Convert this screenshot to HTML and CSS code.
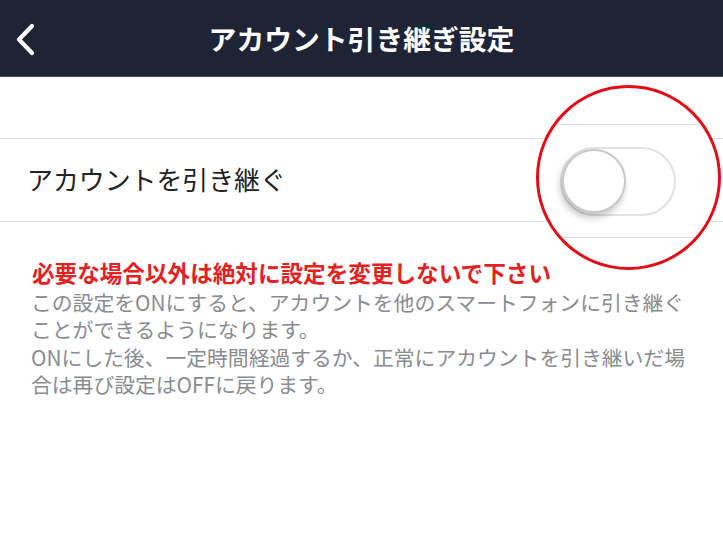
FILE: index.html
```html
<!DOCTYPE html>
<html lang="ja">
<head>
<meta charset="utf-8">
<link rel="stylesheet" href="styles.css">
</head>
<body>
<div class="page">
  <header class="bar">
    <svg class="back" width="24" height="34" viewBox="0 0 24 34">
      <path d="M17 4 L4 17.5 L17 31" fill="none" stroke="#fff" stroke-width="4.2" stroke-linecap="round" stroke-linejoin="round"/>
    </svg>
    <h1 class="title">アカウント引き継ぎ設定</h1>
  </header>
  <div class="row">
    <span class="label">アカウントを引き継ぐ</span>
  </div>
  <div class="notes">
    <p class="warn">必要な場合以外は絶対に設定を変更しないで下さい</p>
    <p class="desc">この設定をONにすると、アカウントを他のスマートフォンに引き継ぐ<br>ことができるようになります。<br>ONにした後、一定時間経過するか、正常にアカウントを引き継いだ場<br>合は再び設定はOFFに戻ります。</p>
  </div>
  <div class="lens">
    <div class="lens-row">
      <div class="track"><div class="knob"></div></div>
    </div>
  </div>
</div>
</body>
</html>
```
FILE: styles.css
```css
* { box-sizing: border-box; }
html, body { margin: 0; padding: 0; background: #fff; }
body { font-family: "Noto Sans CJK JP", "Noto Sans", sans-serif; width: 723px; height: 533px; overflow: hidden; }
.page { position: relative; width: 723px; height: 533px; }
.bar {
  height: 77px;
  background: #1e2436;
  border-bottom: 1px solid #474c5a;
  display: flex;
  align-items: center;
  justify-content: center;
  position: relative;
}
.back { position: absolute; left: 15px; top: 22px; }
.title {
  margin: 0;
  color: #fff;
  font-size: 27.8px;
  font-weight: 700;
  line-height: 1;
  padding-top: 1px;
}
.row {
  margin-top: 61px;
  height: 84px;
  border-top: 1px solid #dedede;
  border-bottom: 1px solid #dedede;
  display: flex;
  align-items: center;
  padding-left: 27px;
}
.label {
  font-size: 25.9px;
  color: #222;
  line-height: 1;
  padding-bottom: 2px;
}
.notes { padding: 37px 0 0 32px; }
.warn {
  margin: 0;
  color: #e3211f;
  font-size: 22.6px;
  font-weight: 700;
  line-height: 28px;
}
.desc {
  margin: 2px 0 0 -1px;
  color: #8a8b91;
  font-size: 20.8px;
  line-height: 27.4px;
}
.lens {
  position: absolute;
  left: 536px;
  top: 85px;
  width: 185px;
  height: 185px;
  border-radius: 50%;
  border: 3px solid #e20d17;
  background: #fff;
  overflow: hidden;
}
.lens-row {
  margin-top: 36px;
  height: 114px;
  border-top: 1px solid #dcdcdc;
  border-bottom: 1px solid #dcdcdc;
  display: flex;
  align-items: center;
  padding-left: 21px;
}
.track {
  width: 116px;
  height: 69px;
  border-radius: 35px;
  border: 2px solid #e2e2e2;
  background: #fff;
  position: relative;
  margin-top: 1px;
}
.knob {
  position: absolute;
  left: 0;
  top: 0;
  width: 64px;
  height: 64px;
  border-radius: 50%;
  background: #fff;
  border: 2px solid #c9c9c9;
  box-shadow: -2px 5px 7px rgba(0,0,0,0.22);
}
```
